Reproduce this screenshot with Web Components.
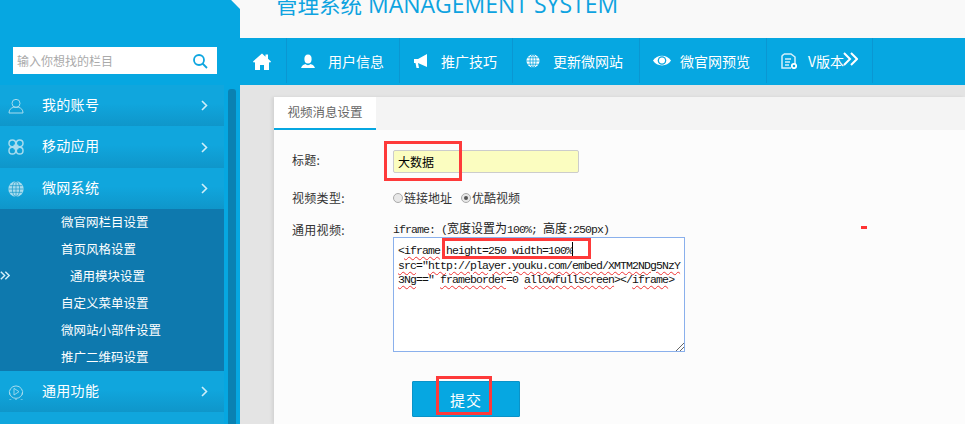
<!DOCTYPE html>
<html><head><meta charset="utf-8">
<style>
html,body{margin:0;padding:0;height:424px;overflow:hidden;background:#e4e4e4}
body{font-family:"Noto Sans CJK SC","Noto Sans",sans-serif;display:flex}
</style></head><body>
<app-sidebar></app-sidebar>
<app-main></app-main>
<script>
const CJK='"Noto Sans CJK SC","Noto Sans",sans-serif';
const icons={
 user:'<circle cx="12" cy="8" r="6" fill="none" stroke="#a8dcee" stroke-width="1.500"/><path d="M1.500 22.500c0-5 3-7.500 6.500-8.500h8c3.500 1 6.500 3.500 6.500 8.500z" fill="none" stroke="#a8dcee" stroke-width="1.500"/>',
 apps:'<g fill="none" stroke="#a8dcee" stroke-width="2.200"><circle cx="6.500" cy="6.500" r="5"/><circle cx="17.500" cy="6.500" r="5"/><circle cx="6.500" cy="17.500" r="5"/><circle cx="17.500" cy="17.500" r="5"/></g><rect x="8.500" y="8.500" width="7" height="7" fill="#a8dcee"/>',
 globe:'<circle cx="12" cy="12" r="11.500" fill="#a8dcee"/><g stroke="#1497c8" stroke-width="1" fill="none"><ellipse cx="12" cy="12" rx="5.500" ry="11.500"/><path d="M12 .5v23M.5 12h23M2.500 7h19M2.500 17h19"/></g>',
 play:'<path d="M2.500 16A10 10 0 1 1 21.500 16" fill="none" stroke="#a8dcee" stroke-width="1.500"/><path d="M2.500 13a9.500 8.500 0 0 0 19 0" fill="none" stroke="#a8dcee" stroke-width="1.500"/><path d="M9 6.500l7.500 5L9 16.500z" fill="none" stroke="#a8dcee" stroke-width="1.300"/><path d="M2 23.500h3M10.500 23.500h3M19 23.500h3" stroke="#a8dcee" stroke-width="1"/>',
 home:'<path d="M9 1.500L0 9.500l1 1.200 1-.8V18h5v-5h4v5h5V9.900l1 .8 1-1.200-3-2.700V2.500h-2.500v2.200z" fill="#fff"/>',
 person:'<ellipse cx="7" cy="5" rx="3.600" ry="4.500" fill="#fff"/><path d="M0 14c1-3 3-3.500 4.500-4 1 1.500 4 1.500 5 0 1.500.5 3.500 1 4.500 4z" fill="#fff"/>',
 horn:'<path d="M0 5h4l9-5v13L4 9v0l1 5H2.500L1.500 9H0z" fill="#fff"/>',
 web:'<circle cx="7" cy="7" r="6.500" fill="#fff"/><g stroke="#06a7e1" stroke-width=".8" fill="none"><ellipse cx="7" cy="7" rx="3" ry="6.500"/><path d="M7 .5v13M.5 7h13M1.500 3.800h11M1.500 10.200h11"/></g>',
 eye:'<path d="M0 7.500C4 1 14 1 18 7.500 14 14 4 14 0 7.500z" fill="#fff"/><circle cx="9" cy="7.500" r="4.300" fill="#06a7e1"/><circle cx="9" cy="7.500" r="3" fill="#fff"/>',
 doc:'<path d="M3 1h7l4 3v7" fill="none" stroke="#d5f0fa" stroke-width="1.500"/><path d="M10 15H1V3l2-2" fill="none" stroke="#d5f0fa" stroke-width="1.500"/><path d="M4 6h6M4 9h5M4 12h4" stroke="#d5f0fa" stroke-width="1.300"/><circle cx="13" cy="13" r="2.200" fill="none" stroke="#fff" stroke-width="1.800"/>'
};
const chev=(w,h,c,sw)=>`<svg width="${w}" height="${h}" viewBox="0 0 15 14" style="flex:none"><path d="M1 1l6 6-6 6M8 1l6 6-6 6" fill="none" stroke="${c}" stroke-width="${sw}"/></svg>`;
function def(n,css,html){customElements.define(n,class extends HTMLElement{
 connectedCallback(){if(this.shadowRoot)return;const r=this.attachShadow({mode:'open'});
 r.innerHTML='<style>'+css+'</style>'+(typeof html==='function'?html(this):html);}
});}
def('search-box',`:host{display:flex;align-items:center;justify-content:space-between;width:204px;height:27px;margin:47px 0 11px 13px;background:#fff;box-sizing:border-box;padding:0 9px 0 4px;font:12px ${CJK};color:#aaa}`,
 `<span>输入你想找的栏目</span><svg width="16" height="16" viewBox="0 0 16 16"><circle cx="7" cy="7" r="5" fill="none" stroke="#0ea6e0" stroke-width="1.800"/><path d="M10.500 10.500L15 15" stroke="#0ea6e0" stroke-width="1.800"/></svg>`);
def('side-item',`:host{display:flex;align-items:center;height:41px;width:224px;background:linear-gradient(#10a6dd 0,#10a6dd 45%,#0f96ca 100%);font:14px/20px ${CJK};letter-spacing:.3px;color:#fff;box-sizing:border-box;padding-left:8px}
svg.i{width:16px;height:16px;flex:none;margin-right:18px}
span{flex:1;margin-top:-4px}
svg.c{margin-right:16px}`,
 h=>`<svg class="i" viewBox="0 0 24 24">${icons[h.getAttribute('icon')]||''}</svg><span>${h.getAttribute('label')||''}</span><svg class="c" width="7" height="11" viewBox="0 0 7 11"><path d="M1 1l4.500 4.500L1 10" fill="none" stroke="#cdeef9" stroke-width="1.600"/></svg>`);
def('side-sub',`:host{display:block;height:27px;font:12.5px/25px ${CJK};color:#fff;padding-left:61px;box-sizing:border-box}
:host([in]){padding-left:70px}`,`<slot></slot>`);
def('side-subs',`:host{display:block;width:224px;background:#0e79ae;position:relative}
div{position:absolute;left:0;top:62px;display:flex}`,`<div>${chev(10,9,'#d5f0fa',2.2)}</div><slot></slot>`);
def('side-scroll',`:host{position:absolute;left:228px;top:89px;bottom:0;width:8px;background:#0a81b2;border-radius:3px 3px 0 0}`,``);
def('app-sidebar',`:host{display:block;flex:none;width:240px;height:424px;background:#06a7e1;position:relative;overflow:hidden}
b{position:absolute;right:-7px;top:-8px;width:14px;height:14px;background:#f9f9f9;transform:rotate(45deg)}`,
 `<b></b><search-box></search-box>
 <side-item icon="user" label="我的账号"></side-item>
 <side-item icon="apps" label="移动应用" style="height:42px"></side-item>
 <side-item icon="globe" label="微网系统"></side-item>
 <side-subs><side-sub>微官网栏目设置</side-sub><side-sub>首页风格设置</side-sub><side-sub in>通用模块设置</side-sub><side-sub>自定义菜单设置</side-sub><side-sub>微网站小部件设置</side-sub><side-sub>推广二维码设置</side-sub></side-subs>
 <side-item icon="play" label="通用功能"></side-item>
 <side-item></side-item>
 <side-scroll></side-scroll>`);
def('app-title',`:host{display:block;height:38px;background:#f9f9f9;overflow:hidden;box-sizing:border-box;padding-left:36px;color:#0ea3e0}
div{margin-top:-11px;font:23px/30px "Open Sans",${CJK};white-space:nowrap}
span{font-size:21.5px}`,`<div><span>管理系统</span> MANAGEMENT SYSTEM</div>`);
def('nav-item',`:host{display:flex;align-items:center;height:45px;margin-bottom:2px;box-sizing:border-box;border-right:1px solid #0a97d2;font:14px/20px ${CJK};color:#fff;flex:none}
.t{white-space:nowrap;display:flex;align-items:center}`,
 h=>`<svg style="flex:none;margin-left:${h.getAttribute('ml')}px;margin-right:${h.getAttribute('mr')}px" width="${h.getAttribute('w')}" height="${h.getAttribute('h')}" viewBox="${h.getAttribute('vb')}">${icons[h.getAttribute('icon')]}</svg><span class="t"><slot></slot></span>`);
def('top-nav',`:host{display:flex;height:47px;background:#06a7e1}`,
 `<nav-item style="width:47px" icon="home" ml="13" mr="0" w="18" h="18" vb="0 0 18 18"></nav-item>
 <nav-item style="width:113px" icon="person" ml="14" mr="13" w="14" h="14" vb="0 0 14 14">用户信息</nav-item>
 <nav-item style="width:113px" icon="horn" ml="14" mr="13" w="14" h="14" vb="0 0 14 14">推广技巧</nav-item>
 <nav-item style="width:127px" icon="web" ml="13" mr="13" w="14" h="14" vb="0 0 14 14">更新微网站</nav-item>
 <nav-item style="width:127px" icon="eye" ml="13" mr="9" w="18" h="15" vb="0 0 18 15">微官网预览</nav-item>
 <nav-item style="width:106px" icon="doc" ml="14" mr="11" w="16" h="16" vb="0 0 16 16">V版本<span style="display:flex;margin:-4px 0 0 -1px">${chev(15,14,'#fff',2)}</span></nav-item>`);
def('panel-tabs',`:host{display:flex;height:33px;background:#f4f4f4;flex:none}
div{width:102px;height:33px;box-sizing:border-box;background:#fff;border-bottom:2px solid #06a7e1;font:12.5px/30px ${CJK};color:#666;text-align:center}`,`<div>视频消息设置</div>`);
def('form-row',`:host{display:flex;font:12px/16px ${CJK};color:#333}
label{width:101px;flex:none;letter-spacing:.3px}
main{flex:1}
:host([tall]) label{padding-top:2px}
:host([low]) label{padding-top:3px}
:host([inline]) main{display:flex;align-items:center;height:16px}`,h=>`<label>${h.getAttribute('label')}</label><main><slot></slot></main>`);
def('text-field',`:host{display:flex;align-items:center;width:186px;height:23px;box-sizing:border-box;background:#fbfdc0;border:1px solid #ccc;border-radius:2px;padding-left:4px;font:12px ${CJK};color:#000}`,`<slot></slot>`);
def('radio-opt',`:host{display:flex;align-items:center;margin-right:9px;font:12px/16px ${CJK};color:#333}
i{width:10px;height:10px;border-radius:50%;box-sizing:border-box;border:1px solid #aaa;background:#e8e8e8;margin-right:1px;display:flex;align-items:center;justify-content:center}
:host([on]) i::after{content:"";width:4px;height:4px;border-radius:50%;background:#555}`,`<i></i><slot></slot>`);
def('hint-line',`:host{display:block;font:11.5px/14px "Liberation Mono",monospace;letter-spacing:-.9px;color:#222;white-space:nowrap;margin-top:2px}
b{font:normal 12px/14px ${CJK};letter-spacing:0}`,`iframe: (<b>宽度设置为</b>100%; <b>高度</b>:250px)`);
def('code-box',`:host{display:block;position:relative;width:292px;height:115px;box-sizing:border-box;background:#fff;border:1px solid #8ab0ec;padding:6px 4px;font:11.5px/14.500px "Liberation Mono",monospace;letter-spacing:-.9px;color:#111;white-space:nowrap}
u{text-decoration:underline wavy #e33 1px;text-underline-offset:2px}
svg{position:absolute;right:0;bottom:0}
s{position:absolute;left:178px;top:4px;width:1px;height:14px;background:#000}`,
 `<div>&lt;<u>iframe</u> height=250 width=100%<br><u>src</u>="<u>http://player.youku.com/embed/XMTM2NDg5NzY</u><br><u>3Ng</u>==" <u>frameborder</u>=0 <u>allowfullscreen</u>&gt;&lt;/<u>iframe</u>&gt;</div><s></s><svg width="9" height="9" viewBox="0 0 9 9"><path d="M1 9L9 1M5 9l4-4" stroke="#666"/></svg>`);
def('submit-btn',`:host{display:flex;align-items:center;justify-content:center;width:108px;height:36px;box-sizing:border-box;background:#06a7e1;border:1px solid #0a93c8;border-radius:1px;color:#fff;font:15px ${CJK};margin-left:120px;letter-spacing:1px}`,`<slot></slot>`);
def('red-mark',`:host{position:absolute;box-sizing:border-box;border:3px solid #fe3a3a}`,``);
def('app-form',`:host{display:flex;flex-direction:column;background:#fcfcfc;padding:20px 0 0 18px;flex:1}`,
 `<form-row tall label="标题:" style="margin-bottom:17px"><text-field>大数据</text-field></form-row>
 <form-row inline label="视频类型:" style="margin-bottom:13px"><radio-opt>链接地址</radio-opt><radio-opt on>优酷视频</radio-opt></form-row>
 <form-row low label="通用视频:"><hint-line></hint-line><code-box></code-box></form-row>
 <submit-btn style="margin-top:29px">提交</submit-btn>`);
def('app-panel',`:host{display:flex;flex-direction:column;flex:1;margin:12px 0 0 34px;box-shadow:-2px 0 3px rgba(0,0,0,.08);background:#fcfcfc;min-height:0}`,`<panel-tabs></panel-tabs><app-form></app-form>`);
def('app-main',`:host{display:flex;flex-direction:column;flex:1;height:424px;position:relative;overflow:hidden;min-width:0}
em{position:absolute;left:621px;top:226px;width:6px;height:3px;background:#f33}`,
 `<app-title></app-title><top-nav></top-nav><app-panel></app-panel>
 <red-mark style="left:144px;top:141px;width:78px;height:40px"></red-mark>
 <red-mark style="left:202px;top:238px;width:149px;height:21px"></red-mark>
 <red-mark style="left:196px;top:376px;width:56px;height:39px"></red-mark><em></em>`);
</script>
</body></html>
